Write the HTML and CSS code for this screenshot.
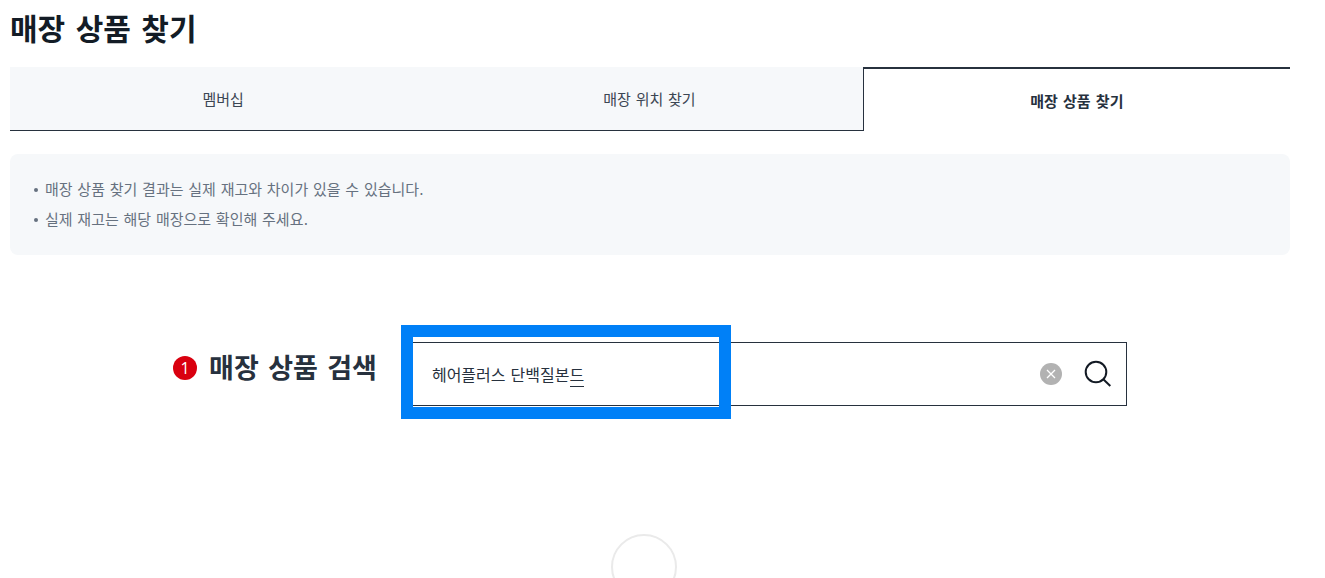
FILE: index.html
```html
<!DOCTYPE html>
<html lang="ko">

<head>
    <meta charset="UTF-8">
    <meta name="viewport" content="width=device-width, initial-scale=1.0">
    <title>매장 상품 찾기</title>

    <link rel="stylesheet" href="styles.css">
</head>

<body>

    <main class="container">
        <h1 class="page-title">매장 상품 찾기</h1>

        <nav class="tabs">
            <a href="#membership" class="tab">멤버십</a>
            <a href="#location" class="tab">매장 위치 찾기</a>
            <a href="#product" class="tab active" aria-current="page">매장 상품 찾기</a>
        </nav>

        <ul class="notice">
            <li>매장 상품 찾기 결과는 실제 재고와 차이가 있을 수 있습니다.</li>
            <li>실제 재고는 해당 매장으로 확인해 주세요.</li>
        </ul>

        <form class="search">
            <span class="step">1</span>
            <label for="keyword" class="search-label">매장 상품 검색</label>
            <div class="search-box">
                <input type="text" id="keyword" class="search-input" value="헤어플러스 단백질본드">
                <span class="composing"></span>
                <button type="reset" class="btn-clear" aria-label="지우기">
                    <svg width="22" height="22" viewBox="0 0 22 22">
                        <circle cx="11" cy="11" r="11" fill="#b2b2b2" />
                        <path d="M7 7l8 8M15 7l-8 8" stroke="#fff" stroke-width="1.3" fill="none" />
                    </svg>
                </button>
                <button type="submit" class="btn-search" aria-label="검색">
                    <svg width="28" height="28" viewBox="0 0 28 28" fill="none" stroke="#131a24" stroke-width="2">
                        <circle cx="12" cy="12" r="10.3" />
                        <path d="M19.3 19.3l7 6.7" />
                    </svg>
                </button>
                <span class="highlight"></span>
            </div>
        </form>

        <div class="result">
            <div class="circle"></div>
        </div>
    </main>

</body>

</html>
```
FILE: styles.css
```css
* {
    box-sizing: border-box;
}

body {
    margin: 0;
    font-family: "DejaVu Sans", "Noto Sans CJK KR", sans-serif;
    color: #27313e;
    background-color: #fff;
    overflow: hidden;
}

.container {
    padding: 8px 35px 0 10px;
}

.page-title {
    margin: 0 0 15px;
    font-size: 30px;
    line-height: 44px;
    color: #131c26;
}

.tabs {
    display: flex;
}

.tab {
    flex: 1;
    height: 64px;
    line-height: 66px;
    text-align: center;
    font-size: 15px;
    color: #3c4653;
    text-decoration: none;
    background-color: #f6f8fa;
    border-bottom: 1px solid #27313e;
}

.tab.active {
    font-weight: bold;
    color: #27313e;
    background-color: #fff;
    border-top: 2px solid #27313e;
    border-left: 1px solid #27313e;
    border-bottom: none;
}

.notice {
    list-style: none;
    margin: 23px 0 87px;
    padding: 21px 24px 20px;
    background-color: #f6f8fa;
    border-radius: 8px;
    font-size: 15px;
    line-height: 30px;
    color: #66717f;
}

.notice li {
    display: flex;
    align-items: center;
    gap: 7px;
}

.notice li::before {
    content: "";
    width: 4px;
    height: 4px;
    border-radius: 50%;
    background-color: #66717f;
}

.search {
    display: flex;
    align-items: center;
    justify-content: center;
}

.step {
    width: 24px;
    height: 24px;
    margin: 0 12px 12px 0;
    border-radius: 50%;
    background-color: #d9000f;
    color: #fff;
    font-family: "Open Sans", sans-serif;
    font-size: 16px;
    line-height: 24px;
    text-align: center;
}

.search-label {
    margin: 0 30px 10px 0;
    font-size: 27px;
    font-weight: bold;
    line-height: 40px;
}

.search-box {
    position: relative;
    display: flex;
    flex: 0 1 720px;
    align-items: center;
    height: 64px;
    padding: 0 14px 0 24px;
    border: 1px solid #27313e;
}

.search-input {
    flex: 1;
    min-width: 0;
    height: 60px;
    padding: 0;
    border: none;
    outline: none;
    background: none;
    font-family: inherit;
    font-size: 16px;
    color: #27313e;
}

/* underline of the syllable being typed */
.composing {
    position: absolute;
    left: 162px;
    top: 43px;
    width: 14px;
    height: 1px;
    background-color: #27313e;
}

.btn-clear,
.btn-search {
    display: flex;
    padding: 0;
    border: none;
    background: none;
    cursor: pointer;
}

.btn-clear {
    margin-right: 22px;
}

.highlight {
    position: absolute;
    left: -7px;
    top: -18px;
    width: 330px;
    height: 94px;
    border: 12px solid #0080f7;
    pointer-events: none;
}

.result {
    display: flex;
    justify-content: center;
    padding: 128px 12px 0 0;
}

.circle {
    width: 66px;
    height: 66px;
    border: 2px solid #eaeaea;
    border-radius: 50%;
}
```
